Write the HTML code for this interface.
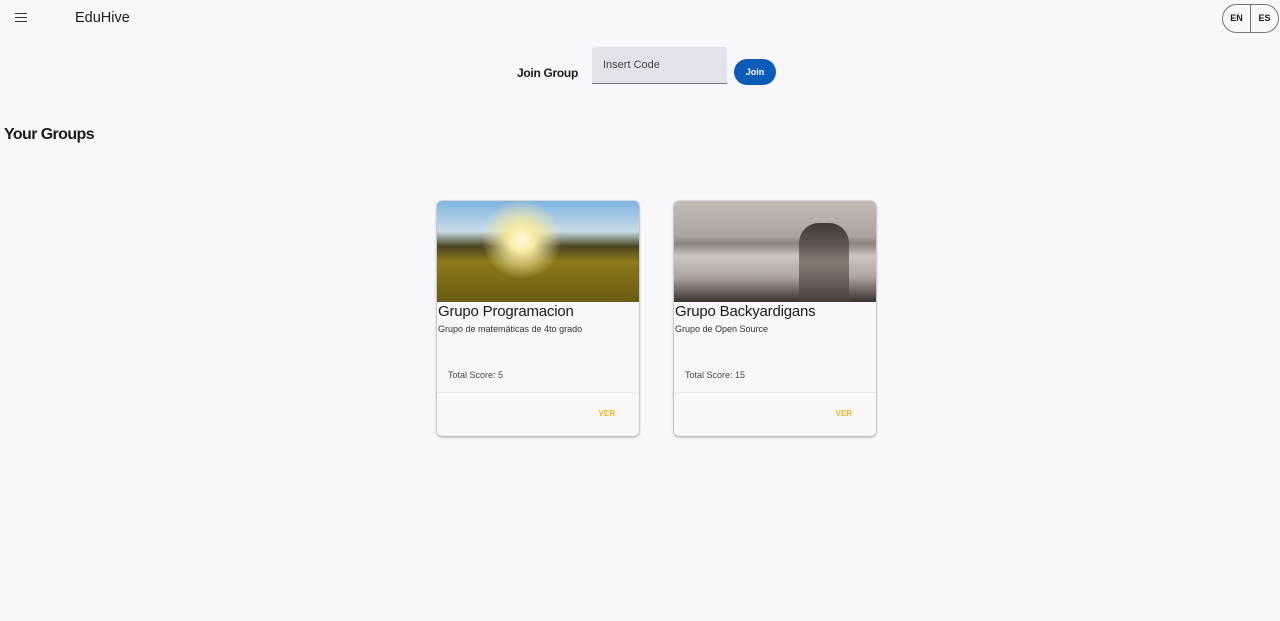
<!DOCTYPE html>
<html><head><style>
*{box-sizing:border-box;margin:0;padding:0}
body{width:1280px;height:621px;background:#f8f8fc;font-family:"Liberation Sans",sans-serif;color:#1b1b1f;position:relative;overflow:hidden}
.a{position:absolute}
.card{position:absolute;top:201px;width:202px;height:235px;background:#f8f8fc;border-radius:5px;box-shadow:0 1px 3px rgba(0,0,0,.3),0 0 0 1px rgba(0,0,0,.08);overflow:hidden}
.img{height:101px;position:relative}
.t{font-size:15px;margin-top:1px;padding-left:1px;letter-spacing:-0.2px}
.d{font-size:9px;color:#333;margin-top:4px;padding-left:1px}
.s{position:absolute;top:169px;left:11px;font-size:9px;color:#444}
.hr{position:absolute;top:191px;left:0;right:0;border-top:1px solid #ececf0}
.v{position:absolute;top:208px;right:24px;font-size:8px;font-weight:bold;color:#f3b41c}
</style></head><body>
<div class="a" style="left:15px;top:13px;width:12px;height:10px">
<div style="height:1px;background:#333;margin-bottom:3px"></div><div style="height:1px;background:#333;margin-bottom:3px"></div><div style="height:1px;background:#333"></div></div>
<div class="a" style="left:75px;top:10px;font-size:14.5px">EduHive</div>
<div class="a" style="left:1222px;top:4px;width:57px;height:29px;border:1px solid #777;border-radius:15px;font-size:9px;font-weight:bold;display:flex">
<div style="width:28px;line-height:27px;text-align:center;border-right:1px solid #777">EN</div><div style="flex:1;line-height:27px;text-align:center">ES</div></div>
<div class="a" style="left:517px;top:66px;font-size:12px;font-weight:bold;letter-spacing:-0.3px">Join Group</div>
<div class="a" style="left:592px;top:47px;width:135px;height:37px;background:#e2e2ea;border-bottom:1px solid #777;border-radius:3px 3px 0 0;font-size:11px;color:#444;padding:12px 0 0 11px">Insert Code</div>
<div class="a" style="left:734px;top:59px;width:42px;height:26px;background:#0a5cb8;border-radius:13px;color:#fff;font-size:9px;font-weight:bold;text-align:center;line-height:26px">Join</div>
<div class="a" style="left:4px;top:126px;font-size:16px;font-weight:bold;letter-spacing:-0.6px">Your Groups</div>
<div class="card" style="left:437px"><div class="img" style="background:radial-gradient(circle at 42% 38%,#fffbe0 0,#f6e9a0 10%,rgba(240,220,140,0) 30%),linear-gradient(180deg,#7fb4e0 0%,#c8dce8 30%,#4a4420 45%,#8c7a1a 60%,#6a5c12 100%)"></div>
<div class="t">Grupo Programacion</div><div class="d">Grupo de matemáticas de 4to grado</div>
<div class="s">Total Score: 5</div><div class="hr"></div><div class="v">VER</div></div>
<div class="card" style="left:674px"><div class="img" style="background:linear-gradient(180deg,#c4bdb5 0%,#aaa39c 35%,#8a837c 42%,#cbc5bd 55%,#aea69e 75%,#3a322c 100%)">
<div class="a" style="left:125px;top:22px;width:50px;height:79px;background:linear-gradient(180deg,#2a2420,#7a6e64 50%,#4a403a);border-radius:20px 20px 0 0;opacity:.85"></div></div>
<div class="t">Grupo Backyardigans</div><div class="d">Grupo de Open Source</div>
<div class="s">Total Score: 15</div><div class="hr"></div><div class="v">VER</div></div>
</body></html>
